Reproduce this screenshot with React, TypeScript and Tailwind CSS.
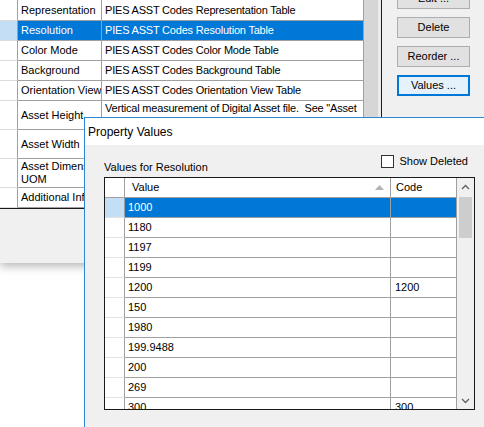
import React from 'react'

type BackRow = {
  name: React.ReactNode
  desc: React.ReactNode
  h: string
  sel?: boolean
  tall?: boolean
}

const backRows: BackRow[] = [
  { name: 'Representation', desc: 'PIES ASST Codes Representation Table', h: 'h-[21px]' },
  { name: 'Resolution', desc: 'PIES ASST Codes Resolution Table', h: 'h-[20px]', sel: true },
  { name: 'Color Mode', desc: 'PIES ASST Codes Color Mode Table', h: 'h-[20px]' },
  { name: 'Background', desc: 'PIES ASST Codes Background Table', h: 'h-[20px]' },
  { name: 'Orientation View', desc: 'PIES ASST Codes Orientation View Table', h: 'h-[20px]' },
  {
    name: 'Asset Height',
    desc: (
      <>
        Vertical measurement of Digital Asset file.{'\u00a0'} See "Asset
        <br />
        Dimension UOM" for format.
      </>
    ),
    h: 'h-[29px]',
    tall: true,
  },
  {
    name: 'Asset Width',
    desc: (
      <>
        Horizontal measurement of Digital Asset file.{'\u00a0'} See "Asset
        <br />
        Dimension UOM" for format.
      </>
    ),
    h: 'h-[29px]',
    tall: true,
  },
  {
    name: (
      <>
        Asset Dimension
        <br />
        UOM
      </>
    ),
    desc: 'Unit of measure for Asset Height and Asset Width.',
    h: 'h-[29px]',
    tall: true,
  },
  { name: 'Additional Info', desc: 'Additional information about the asset.', h: 'h-[20px]' },
]

const values: { v: string; code?: string }[] = [
  { v: '1000' },
  { v: '1180' },
  { v: '1197' },
  { v: '1199' },
  { v: '1200', code: '1200' },
  { v: '150' },
  { v: '1980' },
  { v: '199.9488' },
  { v: '200' },
  { v: '269' },
  { v: '300', code: '300' },
  { v: '3000' },
]

function Chevron({ up }: { up?: boolean }) {
  return (
    <svg width="9" height="6" viewBox="0 0 9 6" className="block">
      <polyline
        points={up ? '1,5 4.5,1.5 8,5' : '1,1 4.5,4.5 8,1'}
        fill="none"
        stroke="#606060"
        strokeWidth="1.3"
      />
    </svg>
  )
}

function WinButton({ label, focused }: { label: string; focused?: boolean }) {
  return (
    <div
      className={
        focused
          ? 'h-[21px] w-[73px] flex items-center justify-center bg-[#e5f1fb] border-2 border-[#0078d7]'
          : 'h-[21px] w-[73px] flex items-center justify-center bg-[#e1e1e1] border border-[#adadad]'
      }
    >
      {label}
    </div>
  )
}

function BackWindow() {
  return (
    <div className="absolute left-0 top-0 w-[484px] h-[263px] bg-[#f0f0f0] shadow-[0_3px_9px_rgba(0,0,0,0.3)]">
      <div className="flex">
        {/* property grid */}
        <div className="flex w-[382px] h-[209px] border-r border-b border-[#1a1a1a] bg-white">
          <div className="flex flex-col w-[364px] overflow-hidden">
            {backRows.map((r, i) => (
              <div key={i} className={`flex shrink-0 ${r.h}`}>
                <div
                  className={`w-[18px] shrink-0 border-r border-b border-r-[#a0a0a0] border-b-[#dcdcdc] ${
                    r.sel ? 'bg-[#c4def5]' : 'bg-white'
                  }`}
                />
                <div
                  className={`w-[84px] shrink-0 pl-[3px] flex items-center overflow-hidden whitespace-nowrap leading-[13px] border-r border-b border-[#a0a0a0] ${
                    r.sel ? 'bg-[#0078d7] text-white' : ''
                  }`}
                >
                  <span>{r.name}</span>
                </div>
                <div
                  className={`flex-1 pl-[3px] overflow-hidden whitespace-nowrap tracking-[-0.2px] border-r border-b border-[#a0a0a0] ${
                    r.tall ? 'leading-[14px]' : 'flex items-center'
                  } ${r.sel ? 'bg-[#0078d7] text-white' : ''}`}
                >
                  {r.desc}
                </div>
              </div>
            ))}
          </div>
          <div className="flex-1 bg-[#d6d6d6] border-r-[3px] border-[#ececec]" />
        </div>

        {/* buttons */}
        <div className="flex flex-col gap-[8px] pl-[15px] -mt-[12px]">
          <WinButton label="Edit ..." />
          <WinButton label="Delete" />
          <WinButton label="Reorder ..." />
          <WinButton label="Values ..." focused />
        </div>
      </div>
    </div>
  )
}

function PropertyValuesDialog() {
  return (
    <div className="absolute left-[84px] top-[117px] w-[430px] h-[330px] border border-[#2b88d8] bg-[#f0f0f0]">
      <div className="h-[27px] bg-white flex items-center pl-[3px] text-[12px]">Property Values</div>

      <div className="pl-[19px] pt-[10px]">
        <div className="flex w-[371px] h-[19px]">
          <div className="self-end leading-[14px]">Values for Resolution</div>
          <div className="ml-auto mr-[7px] flex items-center gap-[6px] self-start h-[13px] whitespace-nowrap">
            <div className="w-[13px] h-[13px] shrink-0 border border-[#333333] bg-white" />
            <span className="leading-[13px]">Show Deleted</span>
          </div>
        </div>

        {/* values grid */}
        <div className="mt-[3px] w-[371px] h-[233px] border border-[#1a1a1a] bg-white flex overflow-hidden">
          <div className="flex flex-col w-[352px] overflow-hidden">
            <div className="flex h-[20px] shrink-0">
              <div className="w-[20px] border-r border-b border-[#a0a0a0]" />
              <div className="w-[266px] border-r border-b border-[#a0a0a0] flex items-center pl-[7px] pr-[6px]">
                <span>Value</span>
                <svg width="9" height="5" viewBox="0 0 9 5" className="ml-auto">
                  <polygon points="0,5 4.5,0 9,5" fill="#b4b4b4" />
                </svg>
              </div>
              <div className="w-[66px] border-r border-b border-[#a0a0a0] flex items-center pl-[5px]">Code</div>
            </div>
            {values.map((row, i) => {
              const sel = i === 0
              return (
                <div key={row.v} className="flex h-[20px] shrink-0">
                  <div
                    className={`w-[20px] border-r border-b border-r-[#a0a0a0] border-b-[#e3e3e3] ${
                      sel ? 'bg-[#c4def5]' : 'bg-white'
                    }`}
                  />
                  <div
                    className={`w-[266px] border-r border-b border-[#a0a0a0] flex items-center pl-[3px] ${
                      sel ? 'bg-[#0078d7] text-white' : ''
                    }`}
                  >
                    {row.v}
                  </div>
                  <div
                    className={`w-[66px] border-r border-b border-[#a0a0a0] flex items-center pl-[4px] ${
                      sel ? 'bg-[#0078d7] text-white' : ''
                    }`}
                  >
                    {row.code ?? ''}
                  </div>
                </div>
              )
            })}
          </div>

          {/* vertical scrollbar */}
          <div className="flex-1 bg-[#f0f0f0] flex flex-col items-center">
            <div className="h-[17px] flex items-center justify-center">
              <Chevron up />
            </div>
            <div className="w-[13px] h-[41px] mt-[2px] bg-[#cdcdcd]" />
            <div className="flex-1" />
            <div className="h-[17px] flex items-center justify-center">
              <Chevron />
            </div>
          </div>
        </div>
      </div>
    </div>
  )
}

export default function App() {
  return (
    <div className="relative w-[484px] h-[427px] overflow-hidden bg-white text-[11px] text-black font-['Liberation_Sans',Arial,sans-serif]">
      <BackWindow />
      <PropertyValuesDialog />
    </div>
  )
}
